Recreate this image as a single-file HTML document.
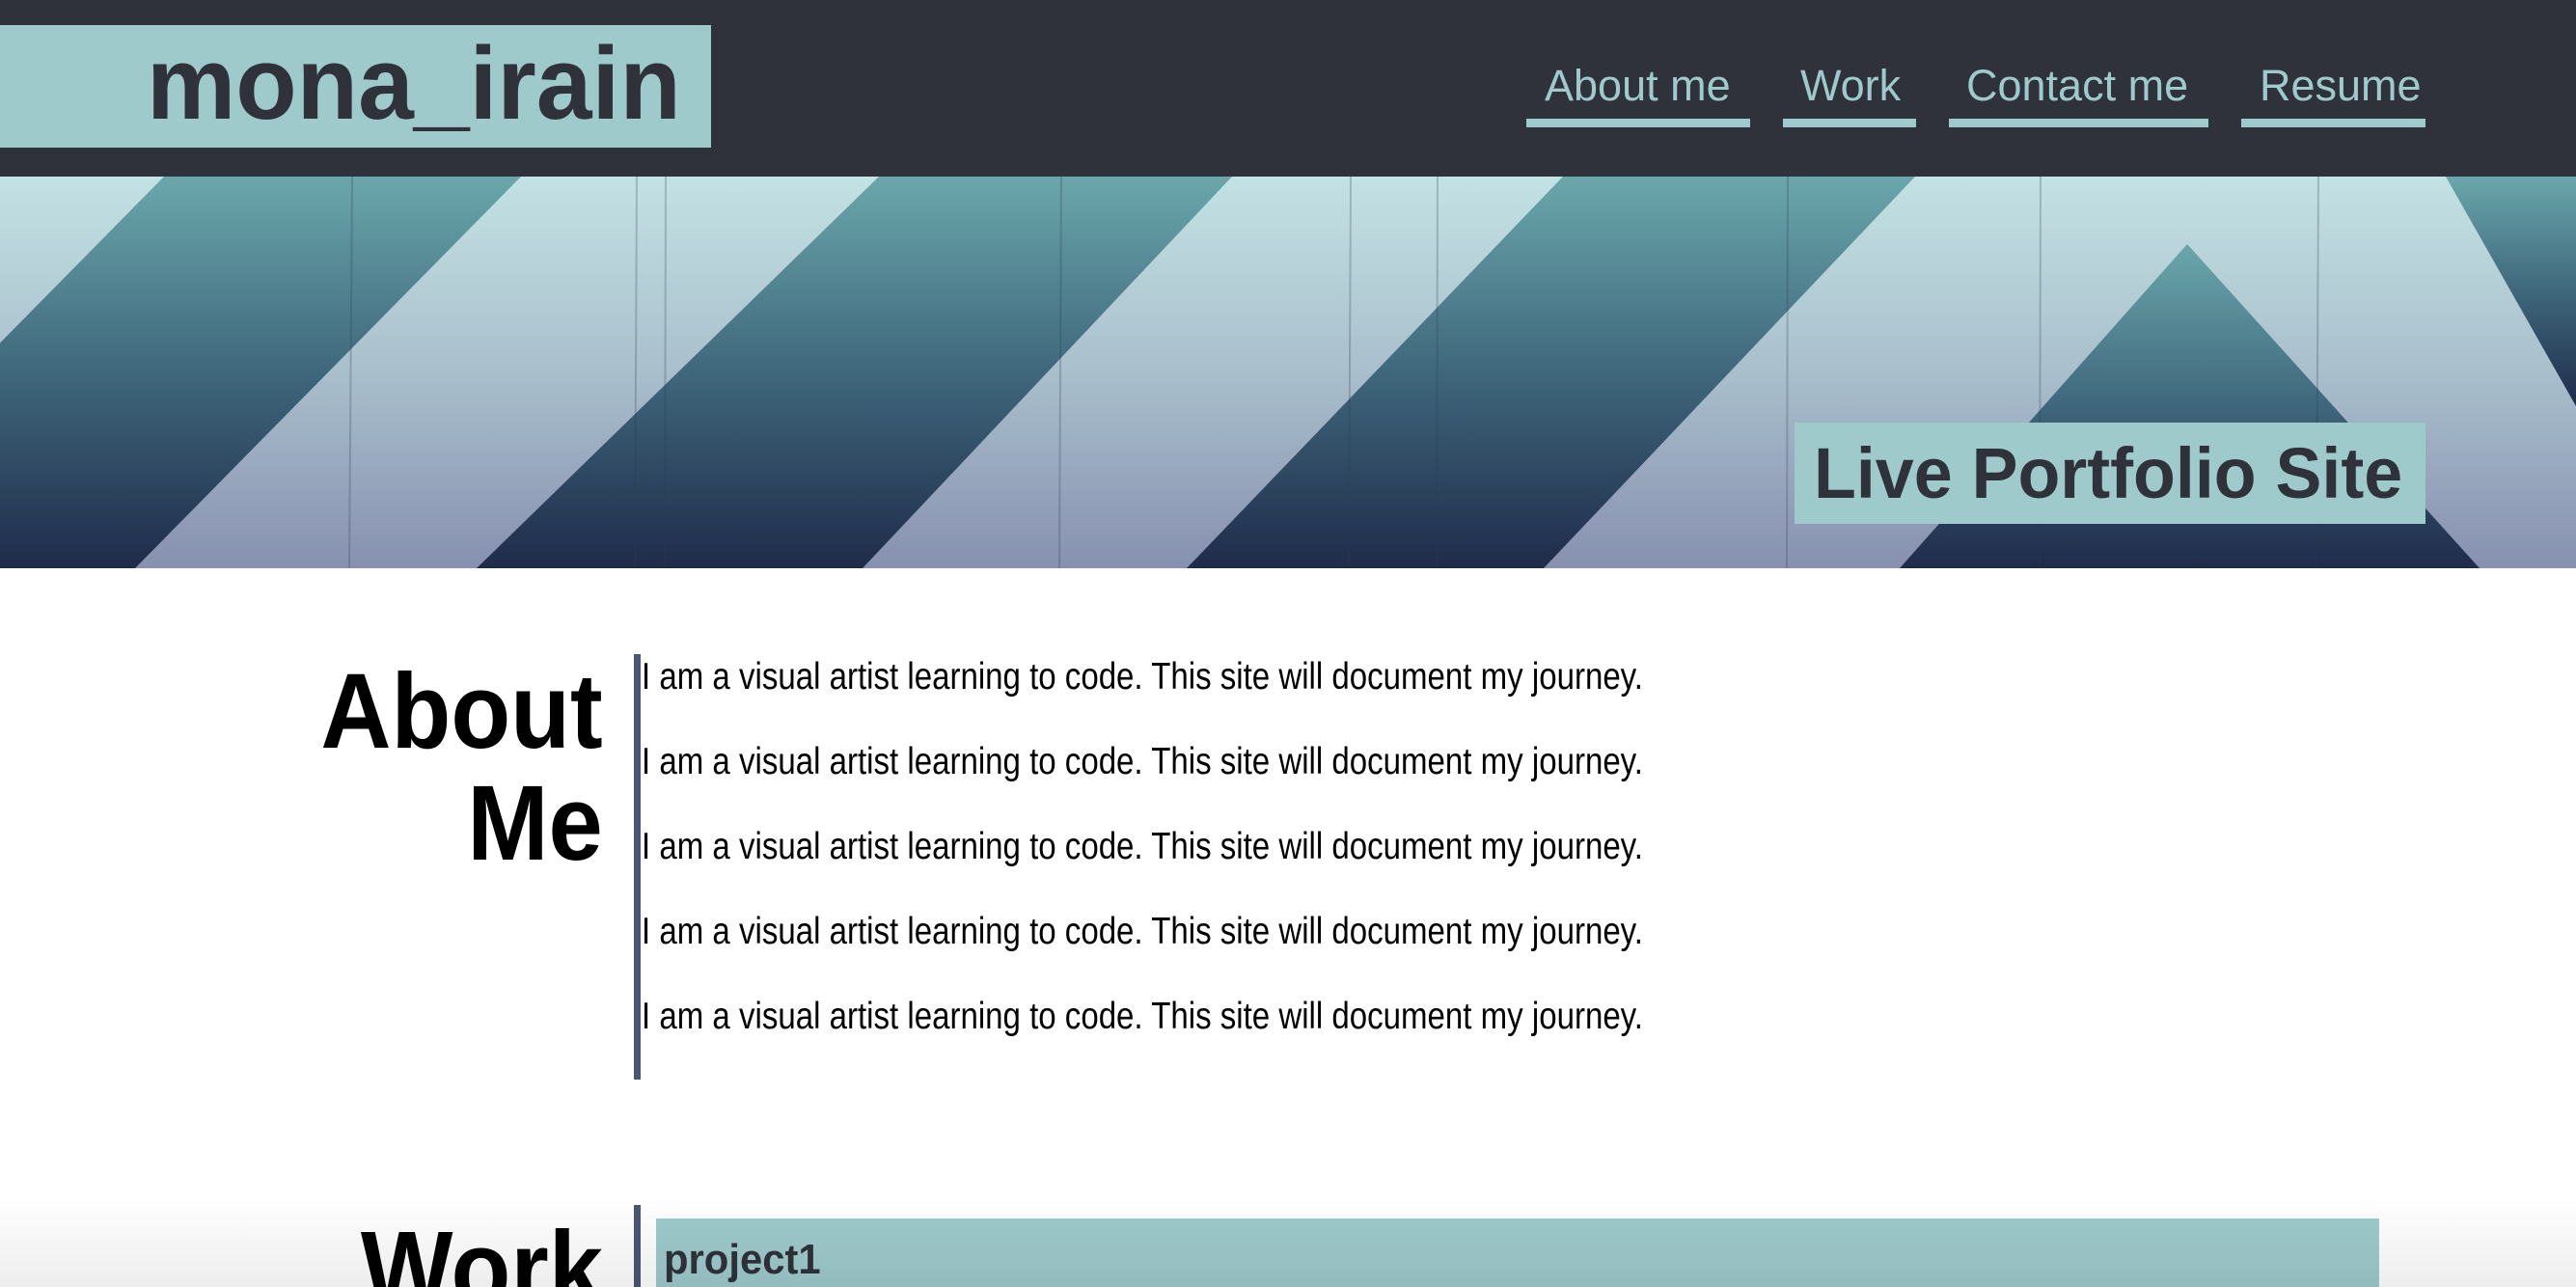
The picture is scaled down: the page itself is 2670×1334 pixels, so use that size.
<!DOCTYPE html>
<html style="overflow:hidden"><head><meta charset="utf-8"><style>
*{margin:0;padding:0;box-sizing:border-box}
html,body{width:2670px;height:1334px;overflow:hidden}
body{background:#fff;position:relative;font-family:"Liberation Sans",sans-serif}
.a{position:absolute;white-space:nowrap}
.sx{display:inline-block;transform-origin:left top}
</style></head><body>
<div class="a" style="left:0;top:0;width:2670px;height:183px;background:#30323b"></div>
<div class="a" style="left:0;top:26px;width:737px;height:127px;background:#9ecacc"></div>
<div class="a" style="left:152px;top:24px;font-size:107px;font-weight:bold;color:#30323b;line-height:124px"><span class="sx" style="transform:scaleX(0.97)">mona_irain</span></div>

<div class="a" style="left:1601px;top:63px;font-size:45px;color:#9ecacc;line-height:52px">About me</div>
<div class="a" style="left:1866px;top:63px;font-size:45px;color:#9ecacc;line-height:52px">Work</div>
<div class="a" style="left:2038px;top:63px;font-size:45px;color:#9ecacc;line-height:52px">Contact me</div>
<div class="a" style="left:2342px;top:63px;font-size:45px;color:#9ecacc;line-height:52px">Resume</div>
<div class="a" style="left:1582px;top:123px;width:232px;height:9px;background:#9ecacc"></div>
<div class="a" style="left:1848px;top:123px;width:138px;height:9px;background:#9ecacc"></div>
<div class="a" style="left:2020px;top:123px;width:269px;height:9px;background:#9ecacc"></div>
<div class="a" style="left:2323px;top:123px;width:191px;height:9px;background:#9ecacc"></div>

<svg class="a" style="left:0;top:183px" width="2670" height="406" viewBox="0 0 2670 406">
<defs>
<linearGradient id="lg" x1="0" y1="0" x2="0" y2="1"><stop offset="0" stop-color="#c3e2e4"/><stop offset="0.5" stop-color="#a9bfcc"/><stop offset="1" stop-color="#8790b0"/></linearGradient>
<linearGradient id="dg" x1="0" y1="0" x2="0" y2="1"><stop offset="0" stop-color="#6aa7ab"/><stop offset="0.5" stop-color="#3f677c"/><stop offset="1" stop-color="#1f2b4a"/></linearGradient>
</defs>
<rect width="2670" height="406" fill="url(#lg)"/>
<g fill="url(#dg)">
<polygon points="170,0 540,0 140,406 -230,406"/>
<polygon points="911,0 1277,0 894,406 494,406"/>
<polygon points="1620,0 1985,0 1600,406 1230,406"/>
<polygon points="2267,70 2570,406 1969,406"/>
<polygon points="2535,0 2670,0 2670,238"/>
</g>
<g stroke="#2a3a55" stroke-opacity="0.25" stroke-width="2">
<line x1="365" y1="0" x2="362" y2="406"/><line x1="660" y1="0" x2="658" y2="406"/><line x1="690" y1="0" x2="689" y2="406"/><line x1="1100" y1="0" x2="1098" y2="406"/><line x1="1400" y1="0" x2="1398" y2="406"/><line x1="1490" y1="0" x2="1489" y2="406"/><line x1="1853" y1="0" x2="1852" y2="406"/><line x1="2115" y1="0" x2="2114" y2="406"/><line x1="2403" y1="0" x2="2401" y2="406"/>
</g>
</svg>
<div class="a" style="left:1860px;top:438px;width:654px;height:105px;background:#9ecacc"></div>
<div class="a" style="left:1880px;top:448px;font-size:74px;font-weight:bold;color:#30323b;line-height:86px"><span class="sx" style="transform:scaleX(0.97)">Live Portfolio Site</span></div>

<div class="a" style="left:300px;top:680px;width:325px;text-align:right;font-size:110px;font-weight:bold;color:#000;line-height:116px">
<div><span class="sx" style="transform:scaleX(0.92);transform-origin:right top">About</span></div>
<div><span class="sx" style="transform:scaleX(0.92);transform-origin:right top">Me</span></div>
</div>
<div class="a" style="left:657px;top:678px;width:7px;height:441px;background:#4a5677"></div>
<div class="a" style="left:665px;top:680px;font-size:39px;color:#000;line-height:44px">
<div style="height:88px"><span class="sx" style="transform:scaleX(0.847)">I am a visual artist learning to code. This site will document my journey.</span></div>
<div style="height:88px"><span class="sx" style="transform:scaleX(0.847)">I am a visual artist learning to code. This site will document my journey.</span></div>
<div style="height:88px"><span class="sx" style="transform:scaleX(0.847)">I am a visual artist learning to code. This site will document my journey.</span></div>
<div style="height:88px"><span class="sx" style="transform:scaleX(0.847)">I am a visual artist learning to code. This site will document my journey.</span></div>
<div style="height:88px"><span class="sx" style="transform:scaleX(0.847)">I am a visual artist learning to code. This site will document my journey.</span></div>
</div>

<div class="a" style="left:657px;top:1249px;width:7px;height:85px;background:#4a5677"></div>
<div class="a" style="left:680px;top:1263px;width:1786px;height:71px;background:#9ecacc"></div>
<div class="a" style="left:688px;top:1280px;font-size:44px;font-weight:bold;color:#30323b;line-height:52px"><span class="sx" style="transform:scaleX(0.95)">project1</span></div>
<div class="a" style="left:300px;top:1258px;width:325px;text-align:right;font-size:110px;font-weight:bold;color:#000;line-height:116px"><span class="sx" style="transform:scaleX(0.92);transform-origin:right top">Work</span></div>
<div class="a" style="left:0;top:1240px;width:2670px;height:94px;background:linear-gradient(to bottom,rgba(0,0,0,0),rgba(0,0,0,0.07));pointer-events:none"></div>
</body></html>
